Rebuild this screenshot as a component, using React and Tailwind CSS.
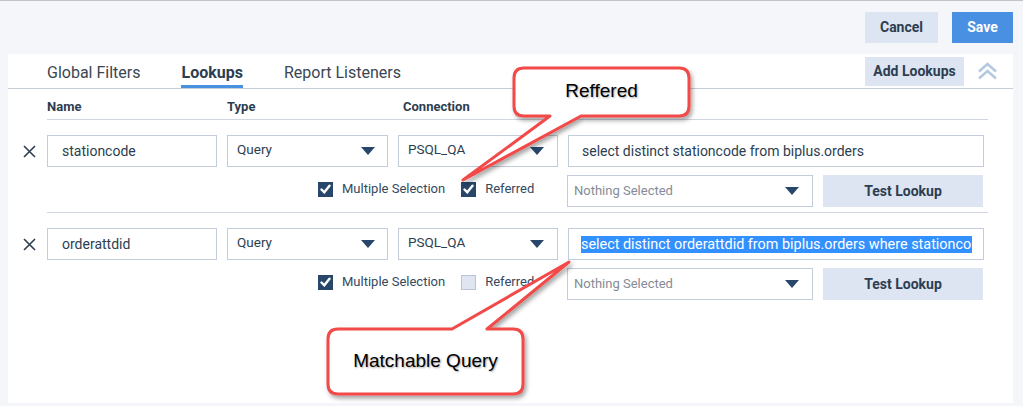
import React from "react"

// Small filled triangle used on every select
function Caret() {
  return (
    <svg width="14" height="8" viewBox="0 0 14 8" className="shrink-0">
      <path d="M0 0h14L7 8z" fill="#27466a" />
    </svg>
  )
}

function CloseIcon() {
  return (
    <svg width="13" height="13" viewBox="0 0 13 13">
      <path d="M1 1l11 11M12 1L1 12" stroke="#2c3e50" strokeWidth="1.6" fill="none" />
    </svg>
  )
}

function Checkbox({ checked, label }) {
  return (
    <div className="flex items-center">
      {checked ? (
        <span className="w-[15px] h-[15px] bg-[#27466a] flex items-center justify-center">
          <svg width="11" height="10" viewBox="0 0 11 10">
            <path d="M1.5 5.5l2.8 2.8L9.5 1.8" stroke="white" strokeWidth="2.4" fill="none" strokeLinecap="round" />
          </svg>
        </span>
      ) : (
        <span className="w-[15px] h-[15px] bg-[#dfe6f2] border border-[#b9c5d6]" />
      )}
      <span className="ml-[9px] text-[13px] text-[#34495e] leading-[16px]">{label}</span>
    </div>
  )
}

function LookupRow({ name, query, referred, highlighted, last }) {
  return (
    <div className="flex">
      <div className="w-[39px] pt-[15px] pl-[3px] flex justify-center">
        <div className="h-[32px] flex items-center">
          <CloseIcon />
        </div>
      </div>

      <div className={`w-[941px] pt-[15px] ${last ? "" : "pb-[5px] border-b border-[#cfd6e0]"}`}>
        <div className="flex gap-[10px] text-[#2c3e50]">
          <div className="w-[170px] h-[32px] border border-[#c3ccda] flex items-center pl-[14px] text-[14px]">
            {name}
          </div>
          <div className="w-[161px] h-[32px] border border-[#c3ccda] flex items-center justify-between pl-[9px] pr-[12px]">
            <span className="text-[13.5px] -mt-[3px]">Query</span>
            <Caret />
          </div>
          <div className="w-[160px] h-[32px] border border-[#c3ccda] flex items-center justify-between pl-[9px] pr-[13px]">
            <span className="text-[13.5px] -mt-[3px]">PSQL_QA</span>
            <Caret />
          </div>
          <div className="w-[416px] h-[32px] border border-[#c3ccda] flex items-center pl-[12px] pr-[11px]">
            <div className="flex-1 overflow-hidden whitespace-nowrap">
              {highlighted ? (
                <span className="bg-[#3390ff] text-white text-[14.4px] leading-[15px]">{query}</span>
              ) : (
                <span className="pl-[1px] text-[14px]">{query}</span>
              )}
            </div>
          </div>
        </div>

        <div className="flex mt-[8px]">
          <div className="w-[520px] flex items-start pt-[6px] pl-[271px] gap-[16px]">
            <Checkbox checked label="Multiple Selection" />
            <Checkbox checked={referred} label="Referred" />
          </div>
          <div className="w-[246px] h-[32px] border border-[#c3ccda] flex items-center justify-between pl-[6px] pr-[13px]">
            <span className="text-[13px] text-[#858c96]">Nothing Selected</span>
            <Caret />
          </div>
          <button className="ml-[10px] w-[160px] h-[32px] bg-[#dde4f2] font-bold text-[14px] text-[#2c3e50]">
            Test Lookup
          </button>
        </div>
      </div>
    </div>
  )
}

export default function App() {
  return (
    <div className="relative w-[1023px] h-[406px] bg-[#f4f6fa] border-t border-[#c4c4c4] overflow-hidden font-['Roboto',sans-serif]">
      {/* Top actions */}
      <div className="h-[53px] flex justify-end items-start pt-[11px] pr-[10px] gap-[14px]">
        <button className="w-[73px] h-[31px] bg-[#dde4f2] font-bold text-[14px] text-[#2c3e50]">Cancel</button>
        <button className="w-[61px] h-[31px] bg-[#4a90e2] font-bold text-[14px] text-white">Save</button>
      </div>

      {/* Lookups panel */}
      <div className="ml-[8px] mr-[10px] h-[349px] bg-white">
        <div className="h-[35px] flex items-stretch border-b border-[#c5cdd9] pl-[39px] pr-[15px]">
          <div className="flex gap-[41px] flex-1">
            <div className="flex items-center pt-[3px] text-[16px] text-[#3a4653]">Global Filters</div>
            <div className="flex items-center pt-[6px] text-[16px] font-bold text-[#2c3e50] border-b-[3px] border-[#4a90e2]">
              Lookups
            </div>
            <div className="flex items-center pt-[3px] text-[16px] text-[#3a4653]">Report Listeners</div>
          </div>
          <div className="flex items-center gap-[13px]">
            <button className="w-[99px] h-[29px] bg-[#dde4f2] font-bold text-[14px] text-[#2c3e50]">Add Lookups</button>
            <svg width="21" height="18" viewBox="0 0 21 18">
              <path d="M2 9.5l8.5-7.5 8.5 7.5M2 16.5l8.5-7.5 8.5 7.5" stroke="#b5c9e0" strokeWidth="2.6" fill="none" />
            </svg>
          </div>
        </div>

        <div className="flex">
          <div className="w-[39px]" />
          <div className="w-[941px] h-[31px] pt-[10px] flex border-b border-[#cfd6e0] text-[13px] leading-[16px] font-bold text-[#2c3e50]">
            <span className="w-[180px]">Name</span>
            <span className="w-[176px]">Type</span>
            <span>Connection</span>
          </div>
        </div>

        <LookupRow name="stationcode" query="select distinct stationcode from biplus.orders" referred />
        <LookupRow
          name="orderattdid"
          query="select distinct orderattdid from biplus.orders where stationcode = '{stationcode}'"
          highlighted
          last
        />
      </div>

      {/* Annotation callouts */}
      <svg className="absolute left-0 top-0 pointer-events-none" width="1023" height="406">
        <defs>
          <filter id="shade" x="-20%" y="-20%" width="140%" height="160%">
            <feDropShadow dx="2" dy="3" stdDeviation="2" floodColor="#000" floodOpacity="0.35" />
          </filter>
        </defs>
        <path
          d="M524 67H679Q689 67 689 77V105Q689 115 679 115H581L463 179L550 115H524Q514 115 514 105V77Q514 67 524 67Z"
          fill="white"
          stroke="#f24848"
          strokeWidth="3"
          strokeLinejoin="round"
          filter="url(#shade)"
        />
        <path
          d="M338 328H452L569 261L487 328H513Q523 328 523 338V383Q523 393 513 393H338Q328 393 328 383V338Q328 328 338 328Z"
          fill="white"
          stroke="#f24848"
          strokeWidth="3"
          strokeLinejoin="round"
          filter="url(#shade)"
        />
      </svg>
      <div className="absolute left-[514px] top-[67px] w-[175px] h-[48px] flex items-center justify-center pb-[1px] font-['Liberation_Sans',Arial,sans-serif] text-[19px] text-black [text-shadow:1px_1px_2px_rgba(0,0,0,0.35)]">
        Reffered
      </div>
      <div className="absolute left-[328px] top-[328px] w-[195px] h-[65px] flex items-center justify-center font-['Liberation_Sans',Arial,sans-serif] text-[19px] text-black [text-shadow:1px_1px_2px_rgba(0,0,0,0.35)]">
        Matchable Query
      </div>
    </div>
  )
}
